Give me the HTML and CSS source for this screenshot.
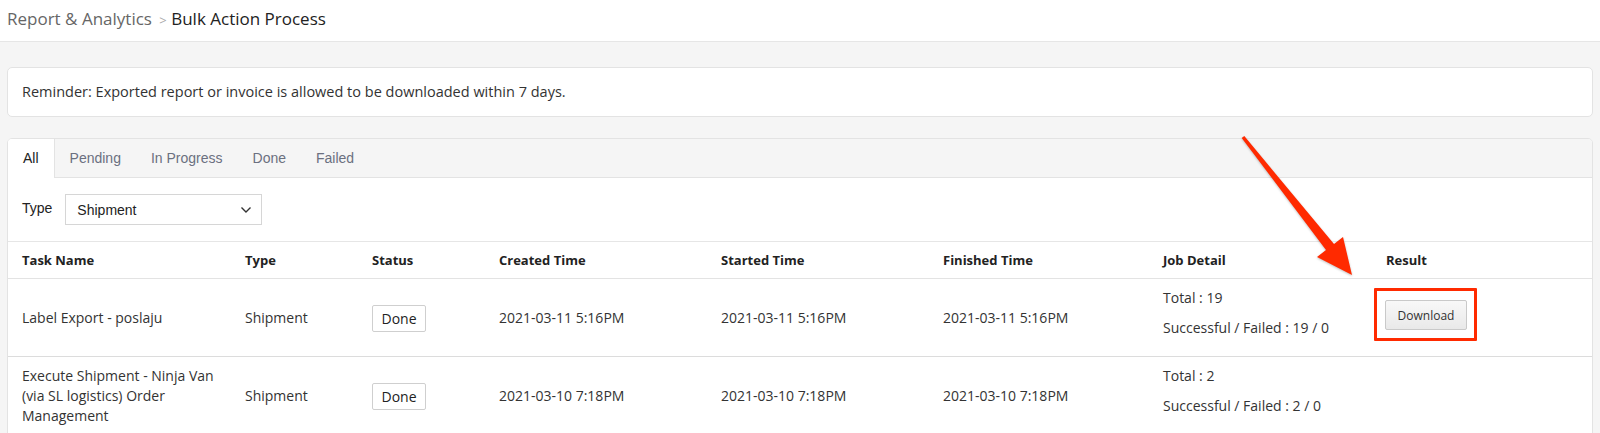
FILE: index.html
```html
<!DOCTYPE html>
<html lang="en">
<head>
  <meta charset="UTF-8">
  <meta name="viewport" content="width=device-width, initial-scale=1.0">
  <title>Bulk Action Process</title>
  <link rel="stylesheet" href="styles.css">
</head>
<body>
  <!-- Breadcrumb -->
  <div class="topbar">
    <span class="crumb">Report &amp; Analytics</span>
    <span class="crumb-sep">&gt;</span>
    <span class="crumb-current">Bulk Action Process</span>
  </div>

  <div class="page">
    <div class="reminder">Reminder: Exported report or invoice is allowed to be downloaded within 7 days.</div>

    <div class="card">
      <div class="tabs">
        <div class="tab active">All</div>
        <div class="tab">Pending</div>
        <div class="tab">In Progress</div>
        <div class="tab">Done</div>
        <div class="tab">Failed</div>
      </div>

      <div class="filter">
        <label class="filter-label">Type</label>
        <div class="select">
          <span>Shipment</span>
          <svg width="12" height="8" viewBox="0 0 12 8"><path d="M1.5 1.5 L6 6 L10.5 1.5" fill="none" stroke="#333" stroke-width="1.4"/></svg>
        </div>
      </div>

      <table class="jobs">
        <colgroup>
          <col style="width:223px"><col style="width:127px"><col style="width:127px"><col style="width:222px">
          <col style="width:222px"><col style="width:220px"><col style="width:223px"><col style="width:220px">
        </colgroup>
        <thead>
          <tr>
            <th>Task Name</th>
            <th>Type</th>
            <th>Status</th>
            <th>Created Time</th>
            <th>Started Time</th>
            <th>Finished Time</th>
            <th>Job Detail</th>
            <th>Result</th>
          </tr>
        </thead>
        <tbody>
          <tr>
            <td>Label Export - poslaju</td>
            <td>Shipment</td>
            <td><span class="status">Done</span></td>
            <td>2021-03-11 5:16PM</td>
            <td>2021-03-11 5:16PM</td>
            <td>2021-03-11 5:16PM</td>
            <td class="detail"><p>Total : 19</p><p>Successful / Failed : 19 / 0</p></td>
            <td class="result"><div class="highlight"><button class="download-btn">Download</button></div></td>
          </tr>
          <tr>
            <td>Execute Shipment - Ninja Van (via SL logistics) Order Management</td>
            <td>Shipment</td>
            <td><span class="status">Done</span></td>
            <td>2021-03-10 7:18PM</td>
            <td>2021-03-10 7:18PM</td>
            <td>2021-03-10 7:18PM</td>
            <td class="detail"><p>Total : 2</p><p>Successful / Failed : 2 / 0</p></td>
            <td class="result"></td>
          </tr>
        </tbody>
      </table>
    </div>
  </div>

  <!-- annotation arrow -->
  <svg class="arrow" width="1600" height="433" viewBox="0 0 1600 433">
    <polygon points="1244.3,136 1334,244 1343,237 1352,275 1317,257 1326,250 1241.7,138" fill="#ff2a00"/>
  </svg>
</body>
</html>
```

FILE: styles.css
```css
body {
  margin: 0;
  background-color: #f5f5f5;
  font-family: "Open Sans", "Liberation Sans", sans-serif;
  font-size: 14px;
  color: #333;
  overflow: hidden;
}
.topbar {
  height: 41px;
  line-height: 37px;
  padding-left: 7px;
  background-color: #fff;
  border-bottom: 1px solid #e6e6e6;
  font-size: 17px;
}
.crumb {
  color: #666;
}
.crumb-sep {
  color: #aaa;
  font-size: 13px;
  margin: 0 0 0 3px;
}
.crumb-current {
  color: #222;
}
.page {
  padding: 25px 7px 0;
}
.reminder {
  background-color: #fff;
  border: 1px solid #e3e3e3;
  border-radius: 5px;
  height: 48px;
  line-height: 48px;
  padding-left: 14px;
  font-size: 14.5px;
  color: #333;
}
.card {
  margin-top: 21px;
  background-color: #fff;
  border: 1px solid #e3e3e3;
  border-radius: 5px 5px 0 0;
  overflow: hidden;
}
.tabs {
  display: flex;
  background-color: #f5f5f5;
  border-bottom: 1px solid #e3e3e3;
  height: 38px;
  font-family: "Liberation Sans", Arial, sans-serif;
  font-size: 14px;
}
.tab {
  padding: 0 15px;
  line-height: 39px;
  color: #6b7080;
}
.tab.active {
  background-color: #fff;
  color: #222;
  border-right: 1px solid #e3e3e3;
  height: 39px;
}
.filter {
  display: flex;
  align-items: center;
  padding: 16px 14px;
  font-family: "Liberation Sans", Arial, sans-serif;
  font-size: 14px;
}
.filter-label {
  color: #222;
  margin-right: 13px;
  position: relative;
  top: -2px;
}
.select {
  display: flex;
  align-items: center;
  justify-content: space-between;
  box-sizing: border-box;
  width: 197px;
  height: 31px;
  padding: 0 9px 0 11px;
  border: 1px solid #d6d6d6;
  color: #222;
}
.jobs {
  width: 100%;
  table-layout: fixed;
  border-collapse: collapse;
  border-top: 1px solid #e6e6e6;
}
.jobs th {
  text-align: left;
  font-size: 13px;
  font-weight: 700;
  color: #222;
  padding: 8px 14px;
  line-height: 20px;
  border-bottom: 1px solid #e3e3e3;
}
.jobs td {
  padding: 9px 14px 8px;
  line-height: 20px;
  vertical-align: middle;
  border-bottom: 1px solid #dcdcdc;
}
.status {
  display: inline-block;
  box-sizing: border-box;
  width: 54px;
  height: 27px;
  line-height: 25px;
  text-align: center;
  border: 1px solid #cfcfcf;
  border-radius: 2px;
  color: #222;
}
.detail p {
  margin: 0 0 10px;
}
.jobs td.result {
  vertical-align: top;
}
.highlight {
  display: inline-block;
  margin-left: -12px;
  padding: 9px 7px 8px 8px;
  border: 3px solid #ff2a00;
  border-radius: 1px;
}
.download-btn {
  display: block;
  width: 82px;
  height: 30px;
  padding: 0;
  font-family: "Open Sans", "Liberation Sans", sans-serif;
  font-size: 12px;
  color: #333;
  background: linear-gradient(#f8f8f8, #e9e9e9);
  border: 1px solid #c9c9c9;
  border-radius: 2px;
}
.arrow {
  position: absolute;
  left: 0;
  top: 0;
  pointer-events: none;
  filter: drop-shadow(0 1px 1px rgba(0, 0, 0, 0.25));
}
```
